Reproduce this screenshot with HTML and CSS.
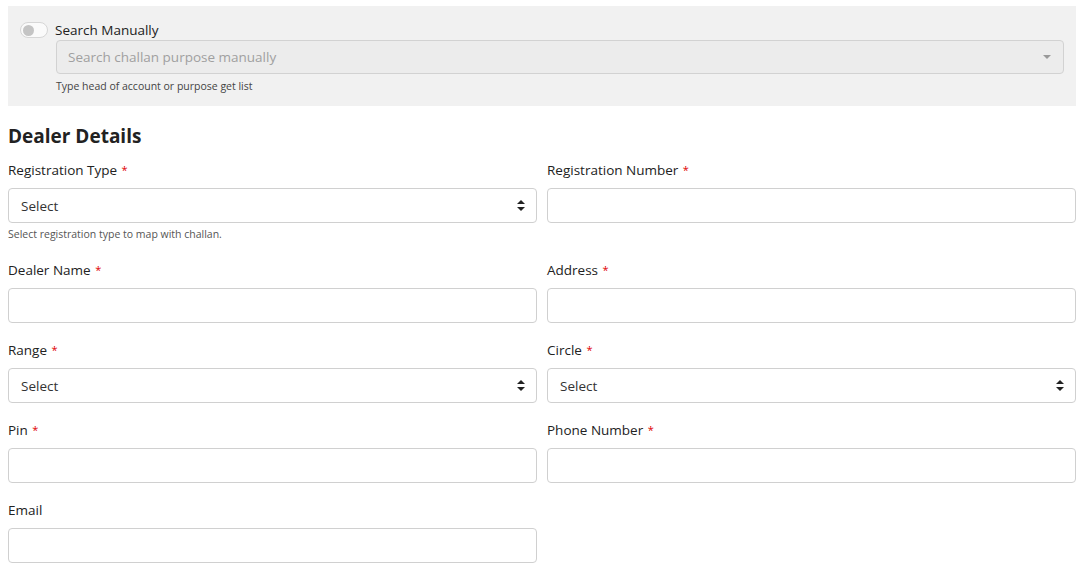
FILE: index.html
```html
<!DOCTYPE html>
<html>
<head>
<meta charset="utf-8">
<link rel="stylesheet" href="styles.css">
</head>
<body>
<div class="page">
  <div class="search-panel">
    <div class="toggle-row">
      <span class="toggle"><span class="knob"></span></span>
      <span class="toggle-label">Search Manually</span>
    </div>
    <div class="search-body">
      <div class="search-select">
        <span class="placeholder">Search challan purpose manually</span>
        <span class="tri"></span>
      </div>
      <div class="hint">Type head of account or purpose get list</div>
    </div>
  </div>

  <h2 class="title">Dealer Details</h2>

  <div class="grid">
    <div class="field">
      <label class="lbl">Registration Type <span class="req">*</span></label>
      <div class="ctrl sel"><span>Select</span><span class="arrows"></span></div>
      <div class="help">Select registration type to map with challan.</div>
    </div>
    <div class="field">
      <label class="lbl">Registration Number <span class="req">*</span></label>
      <div class="ctrl"></div>
    </div>
    <div class="field">
      <label class="lbl">Dealer Name <span class="req">*</span></label>
      <div class="ctrl"></div>
    </div>
    <div class="field">
      <label class="lbl">Address <span class="req">*</span></label>
      <div class="ctrl"></div>
    </div>
    <div class="field">
      <label class="lbl">Range <span class="req">*</span></label>
      <div class="ctrl sel"><span>Select</span><span class="arrows"></span></div>
    </div>
    <div class="field">
      <label class="lbl">Circle <span class="req">*</span></label>
      <div class="ctrl sel"><span>Select</span><span class="arrows"></span></div>
    </div>
    <div class="field">
      <label class="lbl">Pin <span class="req">*</span></label>
      <div class="ctrl"></div>
    </div>
    <div class="field">
      <label class="lbl">Phone Number <span class="req">*</span></label>
      <div class="ctrl"></div>
    </div>
    <div class="field">
      <label class="lbl">Email</label>
      <div class="ctrl"></div>
    </div>
  </div>
</div>
</body>
</html>
```
FILE: styles.css
```css
* { box-sizing: border-box; }
body {
  margin: 0;
  background: #fff;
  font-family: "Open Sans", "Noto Sans", sans-serif;
  color: #212529;
}
.page { padding: 6px 9px 0 8px; }
.search-panel {
  background: #f1f1f1;
  padding: 14px 12px 12px 12px;
  height: 100px;
}
.toggle-row { display: flex; align-items: center; height: 20px; }
.toggle {
  width: 28px; height: 16px;
  border: 1px solid #d6d6d6;
  border-radius: 8px;
  background: #fafafa;
  display: flex; align-items: center;
  padding-left: 2px;
}
.knob { width: 11px; height: 11px; border-radius: 50%; background: #c4c4c4; }
.toggle-label { margin-left: 7px; font-size: 13.5px; color: #222; }
.search-body { margin-left: 36px; }
.search-select {
  margin-top: 0;
  height: 34px;
  border: 1px solid #d2d2d2;
  border-radius: 4px;
  background: #ececec;
  display: flex; align-items: center; justify-content: space-between;
  padding: 0 12px 0 11px;
}
.placeholder { font-size: 13.5px; color: #a0a0a0; }
.tri {
  width: 0; height: 0;
  border-left: 4px solid transparent;
  border-right: 4px solid transparent;
  border-top: 4px solid #999;
}
.hint { font-size: 10.5px; color: #444; margin-top: 5px; }
.title {
  font-size: 19px; font-weight: 700;
  margin: 18px 0 0 0;
  line-height: 24px;
  color: #222;
}
.grid {
  display: grid;
  grid-template-columns: 1fr 1fr;
  column-gap: 10px;
  margin-top: 11px;
}
.field { display: flex; flex-direction: column; padding-top: 1px; }
.lbl { font-size: 13.5px; line-height: 20px; height: 20px; color: #222; }
.req { color: #e00000; font-size: 11px; position: relative; top: -1px; margin-left: 1px; }
.ctrl {
  margin-top: 8px;
  height: 35px;
  border: 1px solid #d0d0d0;
  border-radius: 4px;
  background: #fff;
  margin-bottom: 16px;
}
.sel {
  display: flex; align-items: center; justify-content: space-between;
  padding: 0 11px 0 12px;
  font-size: 13.5px; color: #333;
}
.arrows {
  width: 8px; height: 11px;
  position: relative;
}
.arrows::before, .arrows::after {
  content: ""; position: absolute; left: 0;
  border-left: 4px solid transparent;
  border-right: 4px solid transparent;
}
.arrows::before { top: 0; border-bottom: 4.5px solid #222; }
.arrows::after { bottom: 0; border-top: 4.5px solid #222; }
.help { font-size: 10.5px; color: #555; margin-top: -12px; margin-bottom: 18px; line-height: 14px; }
```
